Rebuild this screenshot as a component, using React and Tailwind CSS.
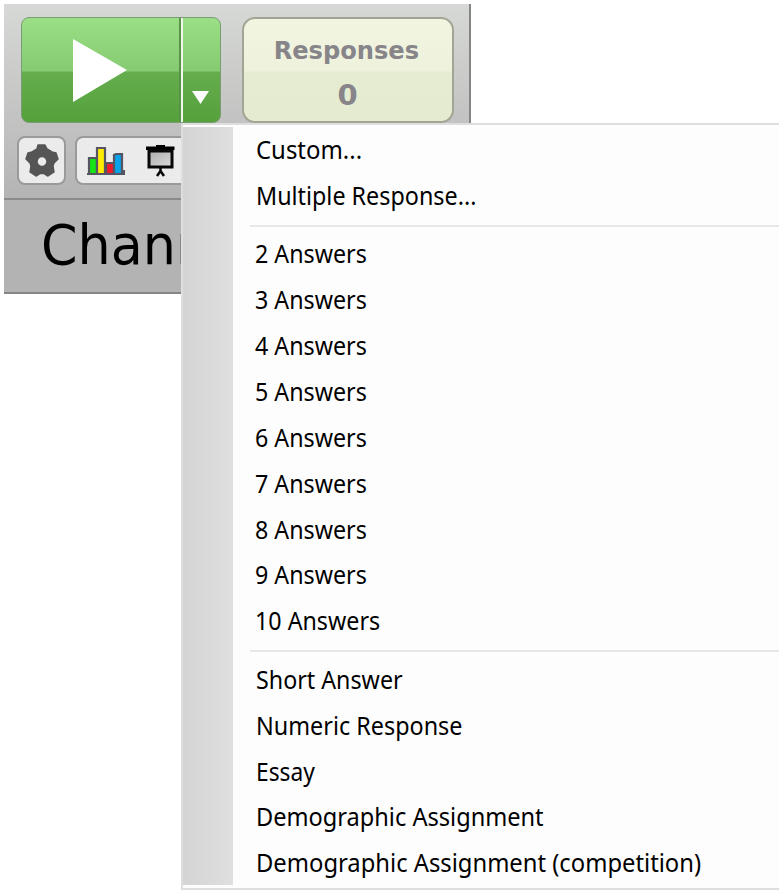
const groups = [
  [
    { label: "Custom...", fit: "scale-x-[0.957]" },
    { label: "Multiple Response...", fit: "scale-x-[0.933]" },
  ],
  [2, 3, 4, 5, 6, 7, 8, 9, 10].map((n) => ({ label: `${n} Answers`, fit: "-ml-px scale-x-[0.93]" })),
  [
    { label: "Short Answer", fit: "scale-x-[0.93]" },
    { label: "Numeric Response", fit: "scale-x-[0.935]" },
    { label: "Essay", fit: "scale-x-[0.91]" },
    { label: "Demographic Assignment", fit: "scale-x-[0.943]" },
    { label: "Demographic Assignment (competition)", fit: "scale-x-[0.951]" },
  ],
];

function PlayButton() {
  return (
    <button className="flex h-[106px] w-[200px] overflow-hidden rounded-[8px] border border-[#7b9b74] bg-[linear-gradient(to_bottom,#9ade86_0%,#86ca72_51%,#65ad4e_52%,#55a13b_100%)]">
      <span className="flex h-full w-[159px] items-center border-r-2 border-[#599347] pl-[51px]">
        <svg width="54" height="63" viewBox="0 0 54 63"><path d="M0 0L54 31L0 63Z" fill="#fff" /></svg>
      </span>
      <span className="flex h-full flex-1 items-end justify-center border-l-2 border-[#eef8eb] pb-[18px] pr-[3px]">
        <svg width="17" height="13" viewBox="0 0 17 13"><path d="M0 0H17L8.500 13Z" fill="#fff" /></svg>
      </span>
    </button>
  );
}

function Gear() {
  return (
    <svg width="34" height="34" viewBox="0 0 34 34">
      <path fillRule="evenodd" fill="#555" stroke="#555" strokeWidth="1.500" strokeLinejoin="round" d="M13 1H20L22 5L27 8L31 9L33 15L29 19L28 22L29 28L23 32L19 29.500H15L11 32L5 28L6 22L5 19L1 15L3 9L7 8L12 5ZM17 12.500A5 5 0 1 0 17 22.500A5 5 0 1 0 17 12.500Z" />
    </svg>
  );
}

function Chart() {
  return (
    <svg width="38" height="30" viewBox="0 0 38 30">
      <g stroke="#555463" strokeWidth="2.200">
        <path d="M2 28V12H10V28" fill="#16e516" />
        <path d="M19 28V17H27V28" fill="#ee1c2b" />
        <path d="M10 28V2H18V28" fill="#ffeb00" />
        <path d="M27 28V9L29 8H35V28" fill="#08a2e8" />
        <path d="M0 28H37V24" fill="none" />
      </g>
    </svg>
  );
}

function Screen() {
  return (
    <svg width="29" height="32" viewBox="0 0 29 32">
      <defs>
        <linearGradient id="screen" x2="1" y2="1"><stop stopColor="#aaa" /><stop offset="1" stopColor="#ddd" /></linearGradient>
      </defs>
      <path d="M10 0H19V1.500H28.500V5H0V1.500H10Z" fill="#000" />
      <rect x="3" y="6" width="23" height="16" fill="url(#screen)" stroke="#080808" strokeWidth="3" />
      <path d="M14.500 23V26L11 31M14.500 26L18 31" fill="none" stroke="#080808" strokeWidth="2.500" />
    </svg>
  );
}

function Menu() {
  return (
    <div className="absolute left-[181px] top-[123px] flex h-[767px] w-[598px] border-y-[2px] border-l-2 border-[#dedede] bg-[#fdfdfd] pb-[3px] pt-[2px]">
      <div className="w-[50px] shrink-0 bg-[linear-gradient(to_right,#d4d4d4,#dfdfdf)]" />
      <div className="min-w-0 flex-1 font-['Noto_Sans','Open_Sans',sans-serif] text-[25px] text-black">
        {groups.map((items, index) => (
          <div key={index}>
            {index > 0 && <div className="ml-[17px] h-[12.500px] pt-[6px]"><div className="h-[2px] w-full bg-[#e7e7e7]" /></div>}
            {items.map(({ label, fit }) => (
              <div key={label} className="flex h-[45.900px] items-center whitespace-nowrap pl-[23px]">
                <span className={`origin-left pb-[1px] leading-[43px] ${fit}`}>{label}</span>
              </div>
            ))}
          </div>
        ))}
      </div>
    </div>
  );
}

export default function App() {
  return (
    <div className="relative h-[890px] w-[779px] overflow-hidden bg-white pl-[4px] pt-[4px]">
      <div className="flex h-[290px] w-[467px] flex-col overflow-hidden border-r-2 border-[#858585]">
        <div className="h-[196px] shrink-0 border-b-2 border-[#8b8b8b] bg-[linear-gradient(to_bottom,#d7d9d6,#b4b4b4)] pl-[13px] pt-[13px]">
          <div className="flex gap-[21px] pl-[4px]">
            <PlayButton />
            <div className="flex h-[106px] w-[212px] flex-col items-center rounded-[13px] border-2 border-[#a1a594] bg-[linear-gradient(to_bottom,#f2f5df_0%,#eef2dc_51%,#e5ecd1_52%,#e5ebd0_100%)] pr-[3px] pt-[14px] font-['DejaVu_Sans',sans-serif] font-bold text-[#87858a]">
              <span className="scale-x-[0.965] text-[25px] leading-[36px]">Responses</span>
              <span className="pl-[2px] text-[29px] leading-[52px]">0</span>
            </div>
          </div>
          <div className="mt-[13px] flex gap-[9px]">
            <div className="flex h-[49px] w-[49px] items-center justify-center rounded-[8px] border-2 border-[#9a9a9a] bg-[#ebebeb]"><Gear /></div>
            <div className="flex h-[49px] w-[160px] shrink-0 items-center gap-[21px] rounded-[8px] border-2 border-[#9a9a9a] bg-[#ebebeb] pl-[10px]"><Chart /><Screen /></div>
          </div>
        </div>
        <div className="h-[94px] border-b-2 border-[#858585] bg-[#b3b3b3] pl-[37px] font-['DejaVu_Sans',sans-serif] text-[56px] leading-[89px] text-black">
          <span className="inline-block origin-left scale-x-[0.935]">Channel</span>
        </div>
      </div>
      <Menu />
    </div>
  );
}
